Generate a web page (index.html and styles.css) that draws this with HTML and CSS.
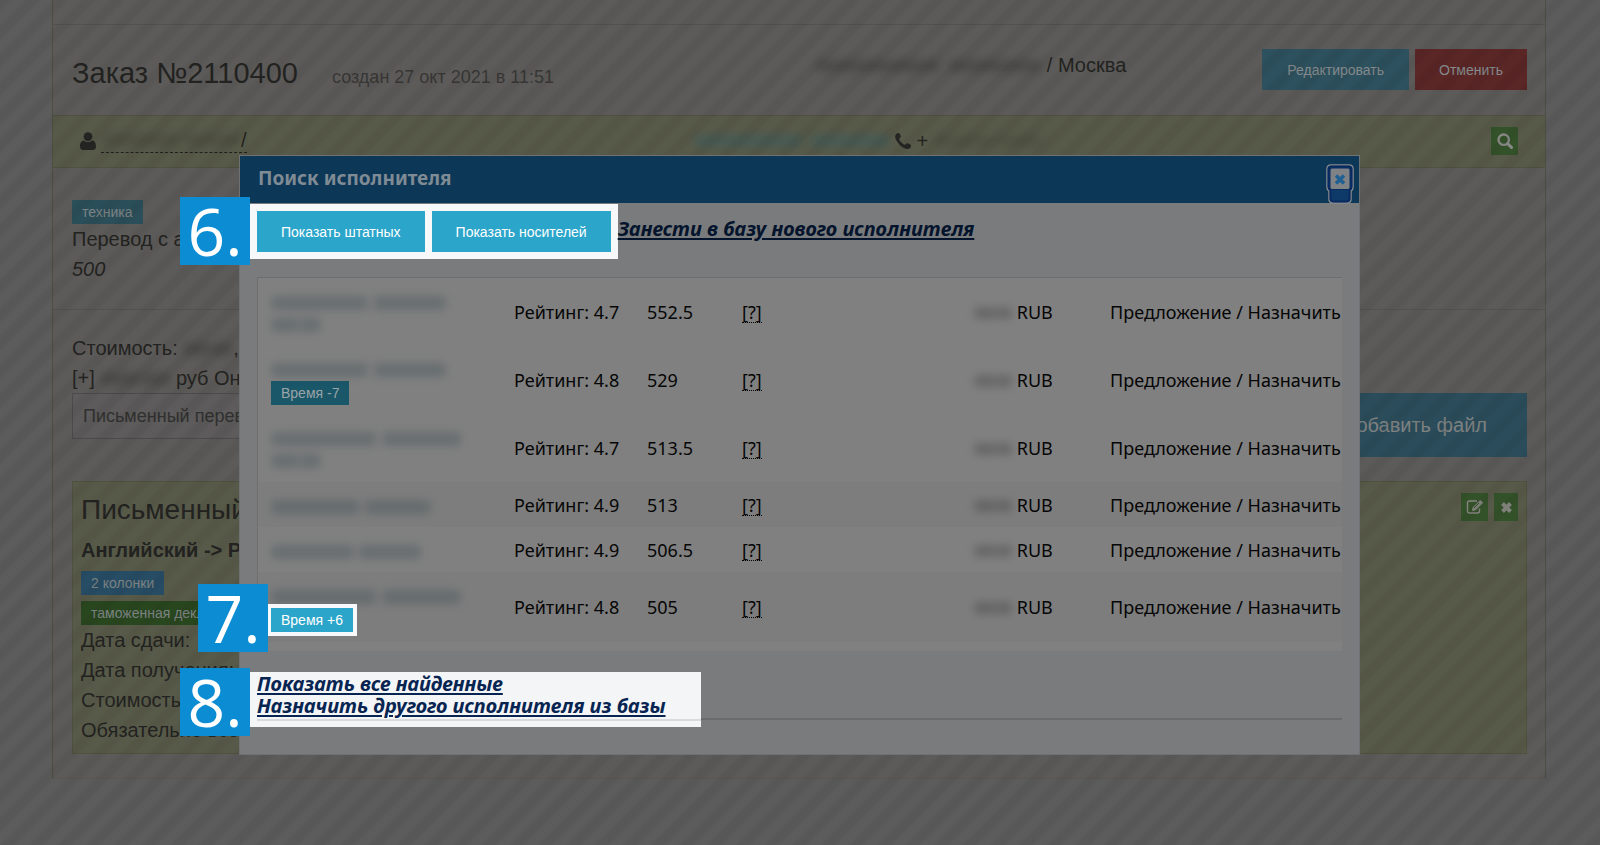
FILE: index.html
```html
<!DOCTYPE html>
<html lang="ru">
<head>
<meta charset="utf-8">
<title>Заказ №2110400</title>
<link rel="stylesheet" href="styles.css">
</head>
<body>
<main class="page">
  <div class="topline"></div>
  <header class="order-head">
    <h1>Заказ №2110400</h1>
    <span class="created">создан 27 окт 2021 в 11:51</span>
    <span class="place"><i class="smudge smudge-place"></i> / Москва</span>
    <div class="actions">
      <button class="btn btn-blue">Редактировать</button>
      <button class="btn btn-red">Отменить</button>
    </div>
  </header>
  <section class="client">
    <div class="client-name">
      <svg width="16" height="18" viewBox="0 0 16 18"><circle cx="8" cy="4.6" r="4.4"/><path d="M4 8.500C1 8.700 0 11.500 0 14.500 0 16.600 1.200 18 3 18h10c1.800 0 3-1.400 3-3.500 0-3-1-5.800-4-6-1 1-2.300 1.600-4 1.600S5 9.500 4 8.500z"/></svg>
      <a href="#"><i class="smudge smudge-client"></i>/</a>
    </div>
    <div class="contacts">
      <i class="smudge smudge-mail"></i>
      <svg width="16" height="16" viewBox="0 0 16 16"><path d="M1.200 1C2.200.2 3.300 0 4 0c.5 0 1.800 2.900 1.900 3.500.1.900-1.700 1.700-1.700 2.400C4.200 7.300 8 11.400 9.800 11.800c.8.200 1.600-1.700 2.500-1.600.6 0 3.700 1.600 3.700 2.200 0 1.300-.6 2.500-1.500 3C11 17.200 5.800 13.600 3.500 10.500 1 7.400-1.200 3.300 1.200 1z"/></svg>
      <span>+</span>
      <i class="smudge smudge-phone"></i>
    </div>
    <button class="icon-btn" aria-label="Поиск">
      <svg width="16" height="16" viewBox="0 0 16 16"><circle cx="6.700" cy="6.700" r="5.200" fill="none" stroke="#8a8a86" stroke-width="2.400"/><path d="M10.500 10.500l4 4" stroke="#8a8a86" stroke-width="3" stroke-linecap="round"/></svg>
    </button>
  </section>
  <section class="brief">
    <span class="tag tag-teal">техника</span>
    <p>Перевод с английского</p>
    <p><em>500</em></p>
  </section>
  <section class="cost">
    <div class="cost-info">
      <p>Стоимость: <i class="smudge smudge-sum"></i>,</p>
      <p>[+] <i class="smudge smudge-pay"></i> руб Онлайн</p>
      <select aria-label="Вид услуги"><option>Письменный перевод</option></select>
    </div>
    <button class="btn btn-file">Добавить файл</button>
  </section>
  <section class="job">
    <div class="job-tools">
      <button class="icon-btn" aria-label="Изменить">
        <svg width="18" height="16" viewBox="0 0 18 16" fill="none" stroke="#85867f"><path d="M11 2H3.500Q1.500 2 1.500 4v8q0 2 2 2h8q2 0 2-2V9.500" stroke-width="1.400"/><path d="M6.500 11.500l.6-3L14.200 1.400l2.400 2.400L9.500 10.900z" fill="#85867f" stroke-width="1"/><path d="M8 9l5-5" stroke="#294f1c"/></svg>
      </button>
      <button class="icon-btn icon-btn-small" aria-label="Удалить">
        <svg width="13" height="13" viewBox="0 0 13 13"><path d="M2.500 2.500l8 8M10.500 2.500l-8 8" stroke="#85867f" stroke-width="4"/></svg>
      </button>
    </div>
    <h2>Письменный перевод</h2>
    <h3>Английский -&gt; Русский</h3>
    <span class="tag tag-blue">2 колонки</span>
    <span class="tag tag-green">таможенная декларация</span>
    <p>Дата сдачи:</p>
    <p>Дата получения:</p>
    <p>Стоимость:</p>
    <p>Обязательно все</p>
  </section>
</main>

<div class="modal" role="dialog" aria-labelledby="modal-title">
  <header class="modal-head">
    <h2 id="modal-title">Поиск исполнителя</h2>
    <button class="close" aria-label="Закрыть">
      <svg width="28" height="40" viewBox="0 0 28 40"><path d="M5 1h18q4 0 4 4v18q0 3-2 4v8q0 4-4 4H7q-4 0-4-4v-8q-2-1-2-4V5q0-4 4-4z" fill="#0d3a68" stroke="#898c90" stroke-width="1.500"/><path d="M5 2.500h18q2.500 0 2.500 2.500v18q0 2-2 3.500v8q0 3-3 3h-13q-3 0-3-3v-8q-2-1.500-2-3.500V5q0-2.500 2.500-2.500z" fill="none" stroke="#082a60" stroke-width="2"/><rect x="4" y="4" width="20" height="21.500" rx="2" fill="#808386" stroke="#082a60"/><path d="M10 11.500l8 8M18 11.500l-8 8" stroke="#205f91" stroke-width="3.600"/></svg>
    </button>
  </header>
  <div class="modal-body">
    <div class="toolbar">
      <div class="lit">
        <b class="step">6.</b>
        <button class="btn btn-lit">Показать штатных</button>
        <button class="btn btn-lit">Показать носителей</button>
      </div>
      <a class="link" href="#">Занести в базу нового исполнителя</a>
    </div>
    <table>
      <colgroup><col class="c-name"><col class="c-rate"><col class="c-score"><col class="c-help"><col class="c-price"><col class="c-act"></colgroup>
      <tbody>
      <tr class="tall"><td><i class="smudge who w175"></i><i class="smudge who w50"></i></td><td>Рейтинг: 4.7</td><td>552.5</td><td><abbr>[?]</abbr></td><td><i class="smudge price"></i> RUB</td><td>Предложение / Назначить</td></tr>
      <tr class="tall"><td><i class="smudge who w175"></i><span class="tag tag-time">Время -7</span></td><td>Рейтинг: 4.8</td><td>529</td><td><abbr>[?]</abbr></td><td><i class="smudge price"></i> RUB</td><td>Предложение / Назначить</td></tr>
      <tr class="tall"><td><i class="smudge who w190"></i><i class="smudge who w50"></i></td><td>Рейтинг: 4.7</td><td>513.5</td><td><abbr>[?]</abbr></td><td><i class="smudge price"></i> RUB</td><td>Предложение / Назначить</td></tr>
      <tr class="odd"><td><i class="smudge who w160"></i></td><td>Рейтинг: 4.9</td><td>513</td><td><abbr>[?]</abbr></td><td><i class="smudge price"></i> RUB</td><td>Предложение / Назначить</td></tr>
      <tr><td><i class="smudge who w150"></i></td><td>Рейтинг: 4.9</td><td>506.5</td><td><abbr>[?]</abbr></td><td><i class="smudge price"></i> RUB</td><td>Предложение / Назначить</td></tr>
      <tr class="odd last"><td><i class="smudge who w190"></i><span class="tag tag-lit">Время +6<b class="step">7.</b></span></td><td>Рейтинг: 4.8</td><td>505</td><td><abbr>[?]</abbr></td><td><i class="smudge price"></i> RUB</td><td>Предложение / Назначить</td></tr>
      </tbody>
    </table>
    <div class="more">
      <div class="more-lit">
        <b class="step">8.</b>
        <a class="link" href="#">Показать все найденные</a>
        <a class="link" href="#">Назначить другого исполнителя из базы</a>
      </div>
    </div>
  </div>
</div>
</body>
</html>
```
FILE: styles.css
```css
* { box-sizing: border-box; }

body {
  margin: 0;
  min-height: 100vh;
  position: relative;
  overflow: hidden;
  background: #5c5c5c;
  color: #232321;
  font: 20px/30px "Liberation Sans", Arial, sans-serif;
}

/* diagonal hatch laid over the inactive page */
body::before {
  content: "";
  position: absolute;
  inset: 0;
  z-index: 1;
  pointer-events: none;
  background: repeating-linear-gradient(135deg, rgba(0, 0, 0, .05) 0 6px, transparent 10px 16px, rgba(0, 0, 0, .05) 20px);
}

h1, h2, h3, p { margin: 0; font-weight: 400; white-space: nowrap; }
button, select { font-family: inherit; border: 0; border-radius: 0; }

.page {
  margin: 0 54px 0 52px;
  border: 1px solid #4e4f42;
  border-top: 0;
  border-bottom-color: #585755;
  padding-bottom: 24px;
  background: #5d5b59;
}
.topline { height: 25px; border-bottom: 1px solid #525150; }

.order-head {
  display: flex;
  height: 90px;
  padding: 24px 18px 0 19px;
}
.order-head h1 { font-size: 29px; line-height: 48px; width: 260px; }
.created { flex: 1; font-size: 18px; line-height: 56px; color: #383736; }
.place { line-height: 32px; width: 446px; white-space: pre; }
.actions { display: flex; gap: 6px; }

.btn { height: 41px; padding: 0 24px; font-size: 14px; white-space: nowrap; }
.btn-blue { padding: 0 25px; background: #2d515e; }
.btn-red { background: #5b2626; }
.btn-blue, .btn-red { color: #858b8d; }

.client {
  display: flex;
  justify-content: space-between;
  align-items: center;
  height: 53px;
  padding: 0 27px 2px;
  background: #585a49;
  border: 1px solid #50523f;
  border-width: 1px 0;
  fill: #252523;
}
.client-name, .contacts { display: flex; align-items: center; gap: 5px; }
.client-name a {
  display: flex;
  align-items: center;
  line-height: 24px;
  color: inherit;
  text-decoration: none;
  border-bottom: 1px dashed #20201e;
}
.icon-btn {
  display: grid;
  place-items: center;
  width: 27px;
  height: 28px;
  padding: 0;
  background: #34522a;
}
.icon-btn-small { width: 24px; }

.brief { height: 142px; padding: 32px 19px 0; border-bottom: 1px solid #545250; }
.tag {
  display: block;
  width: max-content;
  padding: 0 10px;
  font-size: 14px;
  line-height: 24px;
  color: #7d8384;
}
.tag-teal { background: #2b4f5a; }
.tag-blue { background: #274d65; margin-bottom: 6px; }
.tag-green { background: #29471f; }

.cost { display: flex; justify-content: space-between; align-items: flex-end; padding: 23px 18px 24px 19px; }
.cost-info { width: 400px; padding-bottom: 18px; }
.cost select {
  appearance: none;
  display: block;
  width: 100%;
  height: 46px;
  padding: 0 10px;
  background: #5d5b5b;
  border: 1px solid #4d4b4a;
  font-size: 18px;
  color: #30302f;
}
.btn-file { height: 64px; padding: 0 40px; font-size: 20px; background: #2b4d5b; color: #7f8282; }

.job {
  position: relative;
  margin: 0 18px 0 19px;
  padding: 8px;
  background: #585a49;
  border: 1px solid #50523f;
}
.job h2 { font-size: 28px; line-height: 40px; }
.job h3 { font-size: 20px; font-weight: 700; line-height: 30px; margin: 5px 0 6px; }
.job-tools { position: absolute; top: 11px; right: 8px; display: flex; gap: 6px; }

.modal {
  position: absolute;
  z-index: 2;
  top: 155px;
  left: calc(15% - 1px);
  right: 15%;
  border: 1px solid #6f7274;
  background: #7a7b7d;
  color: #060606;
  font: 18px/22px "Noto Sans", "Open Sans", sans-serif;
}
.modal-head {
  display: flex;
  justify-content: space-between;
  height: 47px;
  padding: 0 5px 0 18px;
  background: #0d3757;
}
.modal-head h2 { font-size: 19px; line-height: 44px; font-weight: 700; color: #7f8b94; }
.close { padding: 8px 0 0; background: none; width: 28px; height: 48px; }

.modal-body { padding: 0 17px 34px; }
.toolbar { display: flex; gap: 7px; padding: 8px 0 25px; }
.lit { position: relative; display: flex; gap: 7px; height: 41px; background: #f7f8fa; box-shadow: 0 0 0 7px #f7f8fa; }
.btn-lit { background: #2ba5ca; color: #fff; font-family: "Liberation Sans", Arial, sans-serif; }
.link {
  display: block;
  width: max-content;
  font-size: 20px;
  font-weight: 700;
  font-style: italic;
  color: #04142c;
  text-underline-offset: 2px;
}
.toolbar .link { padding-top: 7px; z-index: 1; }
.step {
  position: absolute;
  z-index: 3;
  top: -14px;
  right: calc(100% + 7px);
  width: 70px;
  height: 68px;
  text-align: center;
  background: #0c8dd3;
  color: #fff;
  font: 400 66px/66px "Open Sans", "Noto Sans", sans-serif;
}

table {
  width: 100%;
  table-layout: fixed;
  border-collapse: separate;
  border-spacing: 0;
  background: #808080;
  border: solid #6d6e6f;
  border-width: 1px 0 0 1px;
  padding-bottom: 9px;
}
.c-name { width: 256px; }
.c-rate { width: 133px; }
.c-score { width: 95px; }
.c-help { width: 232px; }
.c-price { width: 136px; }
tr { height: 45px; }
.tall { height: 68px; }
.last { height: 70px; }
.odd { background: #7d7d7d; }
td { padding: 0; white-space: nowrap; vertical-align: middle; }
td:first-child { padding-left: 13px; }
td:last-child { text-align: right; padding-right: 3px; }
abbr { display: inline-block; line-height: 20px; border-bottom: 1px dotted #000; }
.tag-time { background: #1a5769; color: #9aa3a6; }
.tag-lit { position: relative; background: #2ba5ca; color: #fff; box-shadow: 0 0 0 4px #f7f8fa; }
.tag-time, .tag-lit { font-family: "Liberation Sans", Arial, sans-serif; }
.tag-lit .step { top: -24px; right: calc(100% + 3px); }

.more { margin-top: 21px; border-bottom: 2px solid #6a6b6d; height: 48px; }
.more-lit {
  position: relative;
  width: 451px;
  height: 55px;
  margin-left: -7px;
  padding: 1px 7px;
  background: linear-gradient(#d8dadc, #d8dadc) 7px 47px / 100% 2px no-repeat #f3f5f7;
}
.more-lit .link { color: #082552; }
.more-lit .step { top: -4px; right: 100%; }

/* hidden personal data */
.smudge {
  display: inline-block;
  height: 12px;
  border-radius: 5px;
  background: linear-gradient(90deg, currentColor 54%, transparent 56% 58%, currentColor 60%);
  opacity: .28;
  filter: blur(4px);
}
.smudge-place { width: 225px; }
.smudge-client { width: 140px; opacity: .18; }
.smudge-mail { width: 196px; color: #2e5a66; opacity: .4; }
.smudge-phone { width: 110px; opacity: .15; }
.smudge-sum { width: 50px; }
.smudge-pay { width: 70px; }
.who { display: block; height: 14px; margin: 8px 0 4px; color: #33464c; opacity: .3; }
.price { width: 38px; opacity: .2; }
.w175 { width: 175px; }
.w190 { width: 190px; }
.w160 { width: 160px; }
.w150 { width: 150px; }
.w50 { width: 50px; }
```
